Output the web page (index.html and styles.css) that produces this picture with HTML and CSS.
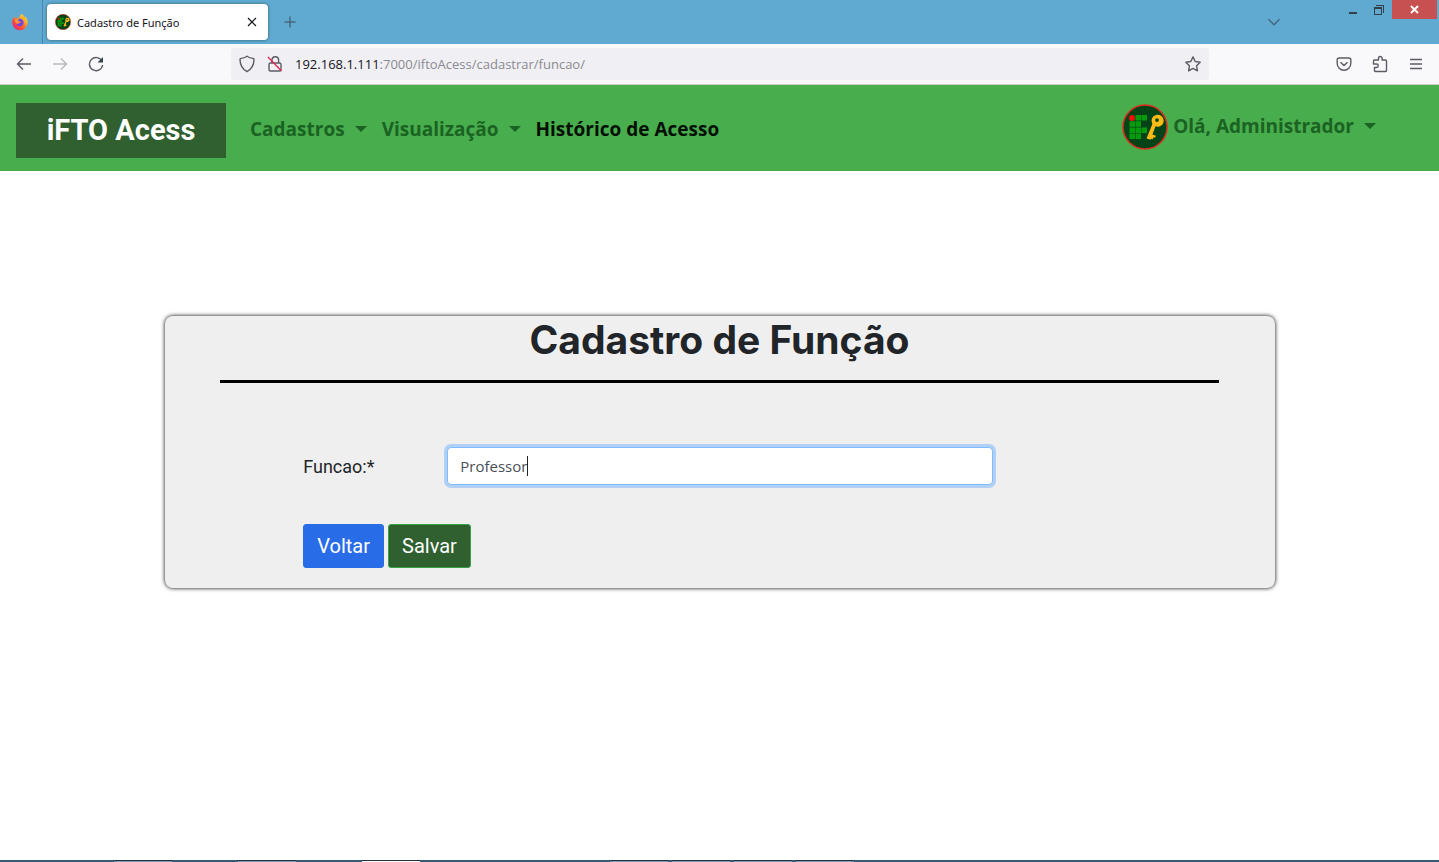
FILE: index.html
```html
<!DOCTYPE html>
<html lang="pt-BR">
<head>
<meta charset="utf-8">
<meta name="viewport" content="width=device-width, initial-scale=1">
<title>Cadastro de Função</title>
<link rel="stylesheet" href="styles.css">
</head>
<body>
<svg class="defs" aria-hidden="true">
  <symbol id="badge" viewBox="0 0 46 46">
    <circle cx="23" cy="23" r="22" fill="#024417" stroke="#e02a1c" stroke-width="1.5"/>
    <circle cx="10" cy="14" r="3" fill="#f00d0d"/>
    <path fill="#069a0c" d="M13.500 11h5.500v5.500h-5.500zM19.500 11H25v5.500h-5.500zM7.500 17.200H13v5.500H7.500zM13.500 17.200h5.500v5.500h-5.500zM7.500 23.400H13v5.500H7.500zM13.500 23.400h5.500v5.500h-5.500zM19.500 23.400H25v5.500h-5.500zM7.500 29.600H13v5.500H7.500zM13.500 29.600h5.500v5.500h-5.500z"/>
    <path fill="#fcba14" fill-rule="evenodd" d="M34 11a6 6 0 1 1-.5 11.300l-3.100 8.200 3.500 1.300-.8 2-1.600-.5-.7 2-1.700-.6-.4 1-4.200-1.300 5.900-14.400A6 6 0 0 1 34 11zm1 3.200a1.900 1.900 0 1 0 0 3.800 1.900 1.900 0 0 0 0-3.800z"/>
  </symbol>
</svg>

<header class="browser">
  <div class="titlebar">
    <div class="pinned">
      <svg width="18" height="18" viewBox="0 0 18 18" role="img" aria-label="Firefox">
        <defs>
          <linearGradient id="fire" x1="1" y1="0" x2="0.100" y2="1">
            <stop offset="0" stop-color="#ffe24b"/><stop offset="0.350" stop-color="#ffad25"/><stop offset="0.650" stop-color="#ff5038"/><stop offset="1" stop-color="#e31587"/>
          </linearGradient>
        </defs>
        <path fill="url(#fire)" d="M11 .8c1.200 1 1.600 2 1.900 3.200.9.400 1.400 0 1.500-.8 1.300 1.800 2.300 4 2.300 6.400A7.700 7.700 0 0 1 9 17.200 7.800 7.800 0 0 1 1.200 9.500c0-2.300.8-3.800 1.700-5l.3 1.200 1.500-2.500.6 1.900c1.200-.3 2 .1 2.700.6C8 3.500 9.300 1.800 11 .8z"/>
        <path fill="#7542e5" d="M8.300 5.800c2.300-.2 4.400 1.400 4.300 3.700a3.700 3.700 0 0 1-7.300.8c1 .8 2.400.6 3.300-.2.600-.4 1.100-.4 1.300-.7-.3-.6-1.400-.3-2.600-.9-.7-.4-.3-1.600 1-2.700z"/>
        <path fill="#ff9a2b" d="M4.300 6c1.300-.5 2.800-.3 3.700.3-.9.500-1.200 1.100-1.100 1.700.7.500 1.900.3 2.700.8-.2.800-1.300 1-1.800 1.400-.8.500-1.800.6-2.600 0C4.300 9.400 3.800 7.600 4.300 6z"/>
      </svg>
    </div>
    <div class="tab">
      <svg width="16" height="16"><use href="#badge"/></svg>
      <span class="tab-title">Cadastro de Função</span>
      <button class="plain tab-close" aria-label="Fechar aba"><svg width="10" height="10" viewBox="0 0 10 10"><path d="M1 1l8 8M9 1L1 9"/></svg></button>
    </div>
    <button class="plain new-tab" aria-label="Nova aba"><svg width="12" height="12" viewBox="0 0 12 12"><path d="M6 .5v11M.5 6h11"/></svg></button>
    <button class="plain tab-list" aria-label="Listar abas"><svg width="14" height="8" viewBox="0 0 14 8"><path d="M1.500 1.200L7 6.700l5.500-5.500"/></svg></button>
    <div class="window-controls">
      <button class="plain" aria-label="Minimizar"><svg width="10" height="10" viewBox="0 0 10 10"><path fill="#1b2b35" d="M1 7h8v2H1z"/></svg></button>
      <button class="plain" aria-label="Restaurar"><svg width="12" height="12" viewBox="0 0 12 12"><path fill="#1b2b35" fill-rule="evenodd" d="M1 3h8v8H1zM2 5v5h6V5zM3 1h8v8h-1V2H3z"/></svg></button>
      <button class="plain close" aria-label="Fechar"><svg width="9" height="9" viewBox="0 0 9 9"><path d="M1 1l7 7M8 1L1 8"/></svg></button>
    </div>
  </div>

  <div class="toolbar">
    <div class="tools">
      <button class="plain tool" aria-label="Voltar página"><svg width="16" height="16" viewBox="0 0 16 16"><path d="M15 8H1.500M7 2.500L1.500 8 7 13.500"/></svg></button>
      <button class="plain tool" aria-label="Avançar página" disabled><svg width="16" height="16" viewBox="0 0 16 16"><path d="M1 8h13.500M9 2.500L14.500 8 9 13.500"/></svg></button>
      <button class="plain tool" aria-label="Recarregar"><svg width="16" height="16" viewBox="0 0 16 16"><path d="M14 5.200A6.600 6.600 0 1 0 14.600 9"/><path fill="#5b5b66" d="M15 1v5.500H9.500z"/></svg></button>
    </div>
    <div class="urlbar">
      <svg width="16" height="18" viewBox="0 0 16 18"><path d="M8 1.200c2 1.500 4 2 6 2.200.8.100 1 .5 1 1.200-.1 5.500-2 9.500-7 12-5-2.500-6.900-6.500-7-12 0-.7.200-1.100 1-1.200 2-.2 4-.7 6-2.200z"/></svg>
      <svg width="16" height="18" viewBox="0 0 16 18"><path d="M5 8V5a3.300 3.300 0 0 1 6.600 0v3M3.500 8h9q1.500 0 1.500 1.500v5q0 1.500-1.500 1.500h-9Q2 16 2 14.500v-5Q2 8 3.500 8z"/><path class="slash" d="M1 2l13.500 14"/></svg>
      <div class="url" role="textbox" aria-label="Endereço"><span class="host">192.168.1.111</span>:7000/iftoAcess/cadastrar/funcao/</div>
      <button class="plain" aria-label="Adicionar aos favoritos"><svg width="16" height="16" viewBox="0 0 16 16"><path stroke-linejoin="round" d="M8 .9l2.200 4.600 5 .7-3.600 3.600.8 5L8 12.400l-4.400 2.400.8-5L.8 6.200l5-.7z"/></svg></button>
    </div>
    <div class="tools">
      <button class="plain tool" aria-label="Salvar no Pocket"><svg width="16" height="16" viewBox="0 0 16 16"><path d="M3 2h10q1.800 0 1.800 1.800v3.700a6.800 6.800 0 0 1-13.600 0V3.800Q1.200 2 3 2zM4.500 6.200L8 9.500l3.500-3.300"/></svg></button>
      <button class="plain tool" aria-label="Extensões"><svg width="16" height="18" viewBox="0 0 16 18"><path stroke-linejoin="round" d="M6.500 5V3.300a1.800 1.800 0 0 1 3.600 0V5h3.400q1 0 1 1v9.500q0 1-1 1H3.500q-1 0-1-1v-3h2a1.500 1.500 0 0 0 0-3.500h-3V6q0-1 1-1z"/></svg></button>
      <button class="plain tool" aria-label="Menu"><svg width="14" height="12" viewBox="0 0 14 12"><path d="M1 1.500h12M1 6h12M1 10.500h12"/></svg></button>
    </div>
  </div>
</header>

<nav class="navbar">
  <a class="brand" href="#">iFTO Acess</a>
  <button class="plain nav-item dropdown">Cadastros</button>
  <button class="plain nav-item dropdown">Visualização</button>
  <a class="nav-item active" href="#">Histórico de Acesso</a>
  <div class="account">
    <svg width="46" height="46" aria-hidden="true"><use href="#badge"/></svg>
    <button class="plain nav-item dropdown">Olá, Administrador</button>
  </div>
</nav>

<main class="page">
  <form class="card">
    <h1 class="card-title">Cadastro de Função</h1>
    <hr class="rule">
    <div class="fields">
      <div class="row">
        <label class="label" for="funcao">Funcao:*</label>
        <div class="control">
          <input class="input" id="funcao" type="text" value="Professor">
          <span class="caret"></span>
        </div>
      </div>
      <div class="actions">
        <button class="btn btn-back" type="button">Voltar</button>
        <button class="btn btn-save" type="submit">Salvar</button>
      </div>
    </div>
  </form>
</main>

<footer class="taskbar">
  <span class="task"></span>
  <span class="task spaced"></span>
  <span class="task spaced current"></span>
  <span class="task group"></span>
  <span class="task"></span>
  <span class="task"></span>
  <span class="task"></span>
</footer>
</body>
</html>
```

FILE: styles.css
```css
* {
  box-sizing: border-box;
}

body {
  margin: 0;
  min-height: 100vh;
  display: flex;
  flex-direction: column;
  background: #fff;
  color: #212529;
  font-family: "Open Sans", "Noto Sans", sans-serif;
  font-size: 16px;
}

.defs {
  display: none;
}

svg {
  display: block;
  flex: none;
}

.plain {
  display: flex;
  align-items: center;
  justify-content: center;
  margin: 0;
  padding: 0;
  border: 0;
  background: none;
  font: inherit;
  color: inherit;
}

.browser button path,
.urlbar path {
  fill: none;
  stroke: #5b5b66;
  stroke-width: 1.4;
}

.browser button path[fill] {
  fill: #33404a;
  stroke: none;
}

/* Window title bar */
.titlebar {
  display: flex;
  height: 44px;
  background: #60a9d0;
}

.pinned {
  display: flex;
  align-items: center;
  width: 43px;
  padding-left: 11px;
  border-right: 1px solid #4788ae;
}

.tab {
  display: flex;
  align-items: center;
  width: 221px;
  margin: 4px 0 4px 4px;
  padding: 0 8px;
  border-radius: 4px;
  background: #fff;
  box-shadow: 0 0 3px rgba(0, 0, 0, 0.5);
  color: #15141a;
}

.tab-title {
  flex: 1;
  margin-left: 6px;
  font-family: "Noto Sans", sans-serif;
  font-size: 11px;
  white-space: nowrap;
}

.tab-close {
  width: 16px;
  height: 16px;
}

.browser .tab-close path {
  stroke: #15141a;
  stroke-width: 1.2;
}

.new-tab {
  width: 44px;
}

.browser .new-tab path,
.browser .tab-list path {
  stroke: #45677d;
}

.tab-list {
  width: 32px;
  margin-left: auto;
}

.window-controls {
  display: flex;
  height: 19px;
  margin: 0 2px 0 50px;
}

.window-controls button {
  width: 26px;
}

.window-controls .close {
  width: 45px;
  background: #c75050;
}

.browser .window-controls .close path {
  stroke: #fff;
  stroke-width: 2;
}

/* Address toolbar */
.toolbar {
  display: flex;
  align-items: center;
  height: 41px;
  padding: 0 7px 0 8px;
  border-bottom: 1px solid #ccccd0;
  background: #f9f9fb;
}

.tools {
  display: flex;
  gap: 4px;
}

.tool {
  width: 32px;
  height: 32px;
}

.tool:disabled {
  opacity: 0.4;
}

.urlbar {
  flex: 1;
  display: flex;
  align-items: center;
  gap: 12px;
  height: 32px;
  margin: 0 119px;
  padding: 0 8px;
  border-radius: 4px;
  background: #f0f0f4;
}

.urlbar .slash {
  stroke: #e22850;
}

.url {
  flex: 1;
  color: #8a8a90;
  font-size: 13px;
  white-space: nowrap;
}

.host {
  color: #15141a;
}

/* Site navigation */
.navbar {
  display: flex;
  align-items: center;
  height: 86px;
  padding: 4px 63px 0 16px;
  background: #48ad4c;
}

.brand {
  width: 210px;
  margin-right: 24px;
  background: #306030;
  color: #fff;
  font-family: Roboto, sans-serif;
  font-size: 29px;
  font-weight: 700;
  line-height: 55px;
  text-align: center;
  text-decoration: none;
}

.nav-item {
  margin-right: 15px;
  padding-bottom: 2px;
  color: #1a6322;
  font-size: 19px;
  font-weight: 700;
  line-height: 28px;
  text-decoration: none;
  white-space: nowrap;
}

.nav-item.active {
  color: #030f04;
}

.dropdown::after {
  content: "";
  margin-left: 10px;
  border: 6px solid transparent;
  border-top-color: currentColor;
  border-bottom-width: 0;
}

.account {
  display: flex;
  align-items: center;
  gap: 5px;
  margin: 0 0 6px auto;
}

.account .nav-item {
  margin: 0;
}

/* Form card */
.page {
  flex: 1;
  padding: 145px 16px 32px;
}

.card {
  max-width: 1110px;
  margin: 0 auto;
  padding-bottom: 20px;
  border-radius: 8px;
  background: #efefef;
  box-shadow: 0 0 4px #000;
}

.card-title {
  margin: 0;
  font-family: Inter, sans-serif;
  font-size: 39px;
  font-weight: 700;
  line-height: 48px;
  text-align: center;
}

.rule {
  width: 90%;
  height: 3px;
  margin: 16px auto 64px;
  border: 0;
  background: #000;
}

.fields {
  width: 75%;
  margin: 0 auto;
  font-family: Roboto, sans-serif;
}

.row {
  display: flex;
  align-items: center;
}

.label {
  width: 144px;
  font-size: 18px;
}

.control {
  position: relative;
  width: 546px;
}

.input {
  display: block;
  width: 100%;
  height: 38px;
  padding: 6px 12px;
  border: 1px solid #80bdff;
  border-radius: 4px;
  outline: 0;
  background: #fff;
  box-shadow: 0 0 0 3px #b0d1f5;
  color: #495057;
  font-family: "Open Sans", sans-serif;
  font-size: 15px;
}

.caret {
  position: absolute;
  top: 9px;
  left: 80px;
  width: 1px;
  height: 20px;
  background: #212529;
}

.actions {
  display: flex;
  gap: 4px;
  margin-top: 39px;
}

.btn {
  height: 44px;
  padding: 0 13px;
  border: 1px solid #286ce8;
  border-radius: 3px;
  background: #286ce8;
  color: #fff;
  font-family: Roboto, sans-serif;
  font-size: 20px;
}

.btn-save {
  border-color: #36a043;
  background: #306030;
}

/* System taskbar edge */
.taskbar {
  display: flex;
  gap: 4px;
  height: 2px;
  padding-left: 114px;
  background: #355a75;
}

.task {
  width: 58px;
  border-top: 1px solid #1c3040;
  background: #8299ad;
}

.spaced {
  margin-left: 62px;
}

.group {
  margin-left: 186px;
}

.current {
  background: #fff;
}
```
